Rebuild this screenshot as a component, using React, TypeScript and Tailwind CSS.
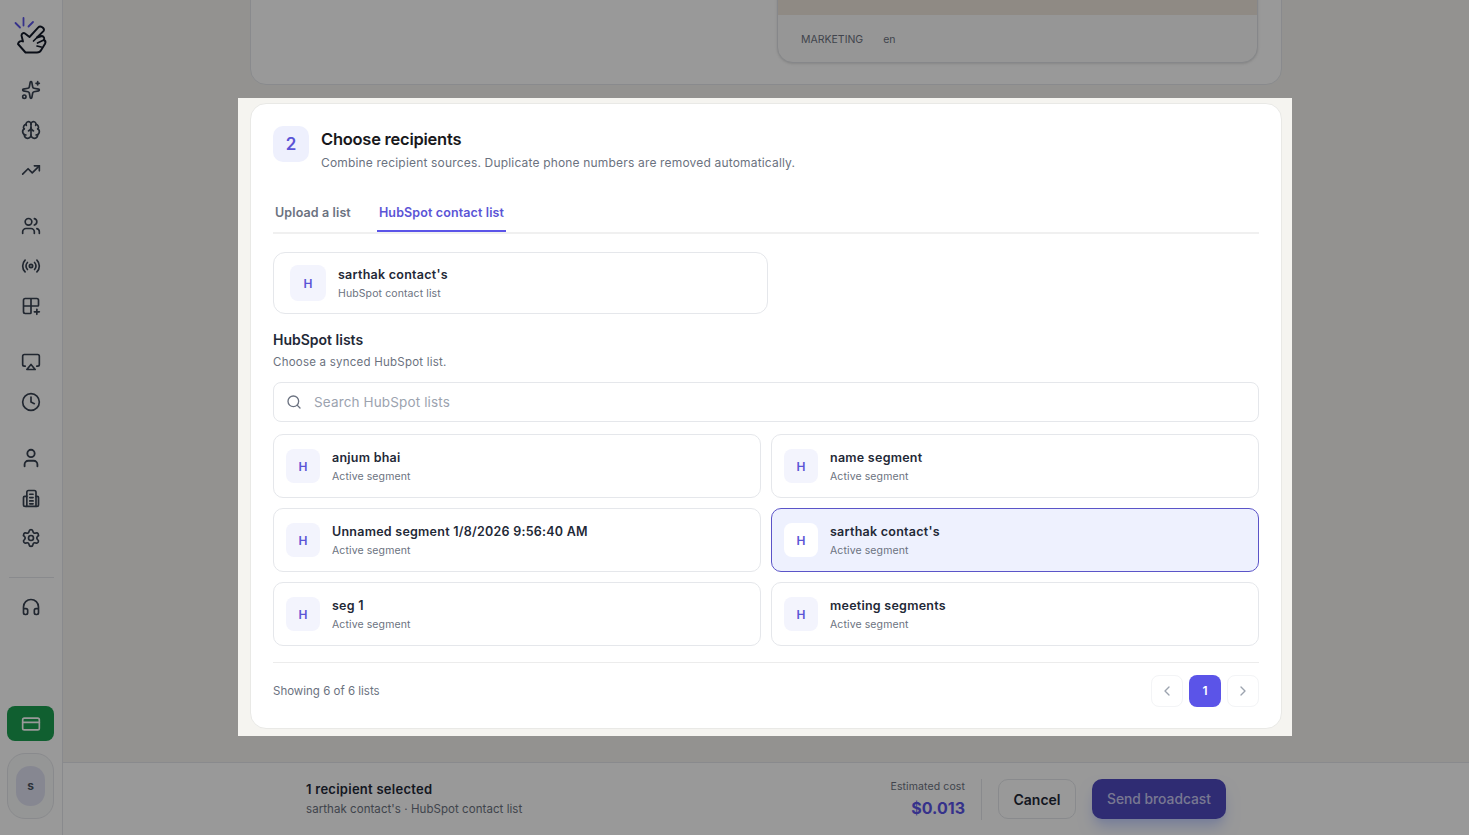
import React from 'react';
import {
  Airplay,
  Brain,
  ChevronLeft,
  ChevronRight,
  Clock,
  CreditCard,
  Grid2x2Plus,
  Headphones,
  Radio,
  Search,
  Settings,
  Sparkles,
  TrendingUp,
  User,
  Users,
} from 'lucide-react';

const BuildingIcon = () => (
  <svg width="20" height="20" viewBox="0 0 24 24" fill="none" stroke="currentColor" strokeWidth="2" strokeLinecap="round" strokeLinejoin="round">
    <path d="M7 22V5a2 2 0 0 1 2-2h7a2 2 0 0 1 2 2v17" />
    <path d="M7 10H4.5A1.5 1.5 0 0 0 3 11.5V20a2 2 0 0 0 2 2h14a2 2 0 0 0 2-2v-8.5a1.5 1.5 0 0 0-1.5-1.5H18" />
    <path d="M10.5 7.5h4M10.5 11.5h4M10.5 15.5h4M10.5 19h4" />
  </svg>
);

// drawn in page pixels, the sidebar's top 62px square
const Logo = () => (
  <svg width="62" height="62" viewBox="0 0 62 62" fill="none" strokeLinecap="round" strokeLinejoin="round">
    <path d="M15.5 23l4.5 4.5M23.5 18v7.5M33 22l-4.5 4.5" stroke="#5b54e8" strokeWidth="1.8" />
    <path
      d="M38.3 27.3L29.5 37L25 33.5C23.5 32.5 21.5 33.5 21.5 35.5L23 41.5C21 40.5 18.5 41.5 18 44L25.5 52.5L37 52.5C39 52.5 40.5 51.5 41.2 50L45.2 43.5C45.8 42 45 40.5 43.8 40C44.8 38.5 44 36.5 42 36L37 37.5L43.7 30.8C45 28.5 40.5 25 38.3 27.3Z"
      stroke="#111827"
      strokeWidth="1.9"
    />
    <path d="M37 37.5L33.5 41M43.8 40L37.5 43M41.2 47L37 46" stroke="#111827" strokeWidth="1.7" />
  </svg>
);

const NavIcon: React.FC<{ children: React.ReactNode }> = ({ children }) => (
  <div className="h-10 w-[61px] self-start flex items-center justify-center text-[#374151]">{children}</div>
);

const Sidebar = () => (
  <aside className="w-[63px] shrink-0 h-full border-r border-[#e5e7eb] bg-white flex flex-col">
    <div className="h-[70px]">
      <Logo />
    </div>
    <NavIcon><Sparkles size={20} /></NavIcon>
    <NavIcon><Brain size={20} /></NavIcon>
    <NavIcon><TrendingUp size={20} /></NavIcon>
    <div className="h-4" />
    <NavIcon><Users size={20} /></NavIcon>
    <NavIcon><Radio size={20} /></NavIcon>
    <NavIcon><Grid2x2Plus size={20} /></NavIcon>
    <div className="h-4" />
    <NavIcon><Airplay size={20} /></NavIcon>
    <NavIcon><Clock size={20} /></NavIcon>
    <div className="h-4" />
    <NavIcon><User size={22} /></NavIcon>
    <NavIcon><BuildingIcon /></NavIcon>
    <NavIcon><Settings size={20} /></NavIcon>
    <div className="w-[45px] ml-[9px] border-t border-[#e5e7eb] mt-[19px] mb-[9px]" />
    <NavIcon><Headphones size={20} /></NavIcon>
    <div className="flex-1" />
    <div className="w-[47px] ml-[7px] h-[35px] rounded-lg bg-[#1b9e50] flex items-center justify-center text-white">
      <CreditCard size={20} />
    </div>
    <div className="w-[47px] ml-[7px] h-[66px] mt-3 mb-4 rounded-[18px] border border-[#e5e7eb] bg-[#f9fafb] flex items-center justify-center">
      <div className="w-[29px] h-[40px] rounded-[14px] bg-[#e0e2f2] flex items-center justify-center text-[12px] font-bold text-[#4b5563]">s</div>
    </div>
  </aside>
);

const HBadge: React.FC<{ size: string; white?: boolean }> = ({ size, white }) => (
  <div className={`${size} shrink-0 rounded-lg flex items-center justify-center pt-[1px] text-[12px] font-semibold text-[#5b54d6] ${white ? 'bg-white' : 'bg-[#f3f4fd]'}`}>H</div>
);

const segments = [
  { name: 'anjum bhai' },
  { name: 'name segment' },
  { name: 'Unnamed segment 1/8/2026 9:56:40 AM' },
  { name: "sarthak contact's", active: true },
  { name: 'seg 1' },
  { name: 'meeting segments' },
];

const SegmentCard: React.FC<{ name: string; active?: boolean }> = ({ name, active }) => (
  <div className={`h-16 rounded-[10px] border px-3 flex items-center gap-3 ${active ? 'border-[#5b54c8] bg-[#eef1fe]' : 'border-[#e5e7eb] bg-white'}`}>
    <HBadge size="w-[34px] h-[34px]" white={active} />
    <div>
      <div className="text-[12.5px] leading-[18px] font-semibold text-[#1f2937] tracking-[0.02em]">{name}</div>
      <div className="text-[10.5px] leading-[14px] mt-[3px] text-[#6b7280] tracking-[0.01em]">Active segment</div>
    </div>
  </div>
);

const RecipientsCard = () => (
  <div className="rounded-2xl bg-white border border-[#e9e9e6] h-[626px] px-[22px] pt-[22px]">
    <div className="flex gap-3">
      <div className="w-9 h-9 rounded-[10px] bg-[#eef0fd] flex items-center justify-center pt-[1px] text-[17px] font-semibold text-[#5b54d6]">2</div>
      <div>
        <h2 className="text-[16.5px] leading-6 font-semibold text-[#18181b] tracking-[-0.015em] mt-[1px]">Choose recipients</h2>
        <p className="text-[12px] leading-4 mt-[4px] text-[#6b7280] tracking-[0.0146em]">Combine recipient sources. Duplicate phone numbers are removed automatically.</p>
      </div>
    </div>

    <div className="flex gap-6 mt-[14px] border-b-2 border-[#f0f0f0] h-[49px] items-stretch">
      <div className="px-[2px] pt-[20px] text-[12.5px] leading-4 font-semibold text-[#6b7280] tracking-[0.01em]">Upload a list</div>
      <div className="px-[2px] pt-[20px] text-[12.5px] leading-4 font-semibold text-[#5b54d6] tracking-[0.01em] border-b-2 border-[#5b54e8]">HubSpot contact list</div>
    </div>

    <div className="w-[495px] h-[62px] mt-[18px] rounded-xl border border-[#e5e7eb] flex items-center gap-3 px-4">
      <HBadge size="w-9 h-9" />
      <div>
        <div className="text-[12.5px] leading-[18px] font-semibold text-[#1f2937] tracking-[0.02em]">sarthak contact's</div>
        <div className="text-[10.5px] leading-[14px] mt-[3px] text-[#6b7280] tracking-[0.01em]">HubSpot contact list</div>
      </div>
    </div>

    <h3 className="text-[14px] leading-5 mt-4 font-semibold text-[#1f2937]">HubSpot lists</h3>
    <p className="text-[11.5px] leading-4 mt-[4px] text-[#6b7280] tracking-[0.02em]">Choose a synced HubSpot list.</p>

    <div className="h-10 mt-3 rounded-lg border border-[#e5e7eb] flex items-center px-3 gap-3">
      <Search size={16} className="text-[#6b7280]" />
      <span className="text-[13.5px] text-[#9ca3af] tracking-[0.01em]">Search HubSpot lists</span>
    </div>

    <div className="grid grid-cols-2 gap-[10px] mt-3">
      {segments.map((s) => (
        <SegmentCard key={s.name} name={s.name} active={s.active} />
      ))}
    </div>

    <div className="flex items-center justify-between border-t border-[#ececec] mt-4 pt-3">
      <span className="text-[11.5px] text-[#6b7280] mt-[2px]">Showing 6 of 6 lists</span>
      <div className="flex gap-[6px]">
        <div className="w-8 h-8 rounded-lg border border-[#f3f4f6] flex items-center justify-center text-[#9ca3af]"><ChevronLeft size={16} /></div>
        <div className="w-8 h-8 rounded-lg bg-[#5b54e8] flex items-center justify-center text-[12px] font-semibold text-white">1</div>
        <div className="w-8 h-8 rounded-lg border border-[#f3f4f6] flex items-center justify-center text-[#9ca3af]"><ChevronRight size={16} /></div>
      </div>
    </div>
  </div>
);

const TemplateCard = () => (
  <div className="h-[120px] shrink-0 rounded-2xl bg-white border border-[#e5e7eb] flex justify-end items-end px-[23px] pb-[21px]">
    <div className="w-[481px] h-[97px] rounded-b-2xl border border-[#e0e2e6] shadow-sm bg-[#fbfbfb] flex flex-col overflow-hidden">
      <div className="flex-1 bg-[#efe6dc]" />
      <div className="h-[47px] flex items-center gap-5 px-[23px] pt-[2px] text-[10.5px] text-[#6b7280]">
        <span>MARKETING</span>
        <span>en</span>
      </div>
    </div>
  </div>
);

const BottomBar = () => (
  <div className="h-[73px] shrink-0 border-t border-[#e5e7eb] bg-white flex items-center justify-between px-[243px]">
    <div className="-mt-[2px]">
      <div className="text-[13px] leading-5 font-semibold text-[#1f2937] tracking-[0.02em]">1 recipient selected</div>
      <div className="text-[11.5px] leading-4 mt-[2px] text-[#6b7280] tracking-[0.005em]">sarthak contact's · HubSpot contact list</div>
    </div>
    <div className="flex items-center">
      <div className="text-right pr-4 pt-[1px] border-r border-[#e5e7eb]">
        <div className="text-[10.5px] leading-[14px] text-[#6b7280] tracking-[0.01em]">Estimated cost</div>
        <div className="text-[16px] leading-6 mt-[2px] font-bold text-[#5b54e8]">$0.013</div>
      </div>
      <button className="ml-4 w-[78px] h-10 rounded-[10px] border border-[#e5e7eb] bg-white text-[14px] font-semibold text-[#1f2937]">Cancel</button>
      <button className="ml-4 w-[134px] h-10 rounded-[10px] bg-[#4f4ac0] text-[13.8px] font-medium text-[#c9c8f2] shadow-lg shadow-indigo-200">Send broadcast</button>
    </div>
  </div>
);

export default function App() {
  return (
    <div className="relative h-screen w-full flex overflow-hidden bg-[#f5f4f0] font-['Inter',sans-serif]">
      <Sidebar />
      <main className="flex-1 min-w-0 h-full flex flex-col">
        <div className="flex-1 min-h-0 overflow-hidden flex flex-col items-center justify-end">
          <div className="w-[1032px] flex flex-col pb-[26px]">
            <TemplateCard />
            <div className="relative z-20 mt-[13px] -ml-[12px] -mr-[10px] pl-[12px] pr-[10px] pt-[5px] pb-[7px] bg-[#f5f4f0]">
              <RecipientsCard />
            </div>
          </div>
        </div>
        <BottomBar />
      </main>
      <div className="absolute inset-0 z-10 bg-black/40" />
    </div>
  );
}
